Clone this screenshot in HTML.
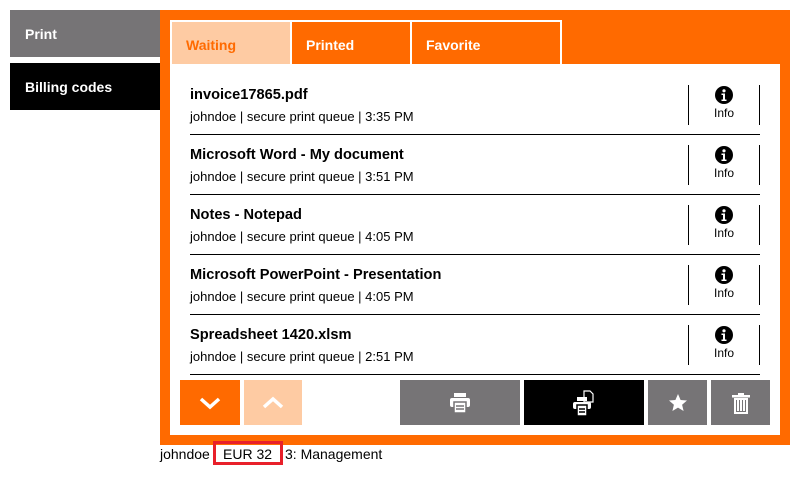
<!DOCTYPE html>
<html><head><style>
*{margin:0;padding:0;box-sizing:border-box}
body{width:800px;height:480px;background:#fff;font-family:"Liberation Sans",Arial,sans-serif;position:relative;overflow:hidden}
.a{position:absolute}
.side{left:10px;width:150px;height:47px;color:#fff;font-weight:bold;font-size:14px;padding:16px 0 0 15px}
.tab{top:22px;height:42px;background:#ff6a00;color:#fff;font-weight:bold;font-size:14px;padding:15px 0 0 14px}
.t{left:190px;font-weight:bold;font-size:14.6px;color:#000}
.s{left:190px;font-size:13px;color:#000}
.sep{left:190px;width:570px;height:1px;background:#000}
.vl{width:1px;height:40px;background:#000}
.btn{top:380px;height:45px;display:flex;align-items:center;justify-content:center}
</style></head><body>
<div class="a side" style="top:10px;background:#767476">Print</div>
<div class="a side" style="top:63px;background:#000">Billing codes</div>
<div class="a" style="left:160px;top:10px;width:630px;height:435px;background:#ff6a00"></div>
<div class="a" style="left:170px;top:20px;width:610px;height:415px;background:#fff"></div>
<div class="a" style="left:562px;top:20px;width:218px;height:44px;background:#ff6a00"></div>
<div class="a tab" style="left:172px;width:118px;background:#fecba3;color:#ff6a00">Waiting</div>
<div class="a tab" style="left:292px;width:118px">Printed</div>
<div class="a tab" style="left:412px;width:148px">Favorite</div>
<div id="rows"></div>
<script>
var d=[["invoice17865.pdf","3:35 PM"],["Microsoft Word - My document","3:51 PM"],["Notes - Notepad","4:05 PM"],["Microsoft PowerPoint - Presentation","4:05 PM"],["Spreadsheet 1420.xlsm","2:51 PM"]];
var h="";d.forEach(function(r,i){var y=74+i*60;
h+='<div class="a t" style="top:'+(y+13)+'px">'+r[0]+'</div><div class="a s" style="top:'+(y+35)+'px">johndoe | secure print queue | '+r[1]+'</div>'+
'<div class="a sep" style="top:'+(y+60)+'px"></div><div class="a vl" style="left:688px;top:'+(y+11)+'px"></div><div class="a vl" style="left:759px;top:'+(y+11)+'px"></div>'+
'<svg class="a" style="left:715px;top:'+(y+12)+'px" width="18" height="18" viewBox="0 0 18 18"><circle cx="9" cy="9" r="9" fill="#000"/><circle cx="9" cy="4.8" r="1.6" fill="#fff"/><path d="M6.5 7.5h3.5v6h1.5v1.5h-5v-1.5h1.5v-4.5h-1.5z" fill="#fff"/></svg>'+
'<div class="a" style="left:689px;width:70px;text-align:center;top:'+(y+32)+'px;font-size:12px">Info</div>';});
document.getElementById("rows").innerHTML=h;
</script>
<div class="a btn" style="left:180px;width:60px;background:#ff6a00"><svg width="24" height="14"><path d="M3 3l9 8 9-8" stroke="#fff" stroke-width="3.5" fill="none"/></svg></div>
<div class="a btn" style="left:244px;width:58px;background:#fecba3"><svg width="24" height="14"><path d="M3 11l9-8 9 8" stroke="#fff" stroke-width="3.5" fill="none"/></svg></div>
<div class="a btn" style="left:400px;width:120px;background:#767476"><svg width="22" height="20" viewBox="0 0 22 20"><rect x="5" y="0" width="12" height="4" fill="#fff"/><rect x="1" y="5" width="20" height="9" rx="2" fill="#fff"/><rect x="5" y="9" width="12" height="11" fill="#fff" stroke="#767476" stroke-width="1.5"/><path d="M7 13h8M7 16h8" stroke="#767476" stroke-width="1.5"/></svg></div>
<div class="a btn" style="left:524px;width:120px;background:#000"><svg width="26" height="26" viewBox="0 0 26 26"><path d="M13 1h6l3 3v8h-9z" fill="none" stroke="#fff" stroke-width="1.2"/><rect x="6" y="7" width="10" height="4" fill="#fff"/><rect x="2" y="12" width="18" height="7" rx="2" fill="#fff"/><rect x="6" y="15" width="10" height="11" fill="#fff" stroke="#000" stroke-width="1.5"/><path d="M8 19h6M8 22h6" stroke="#000" stroke-width="1.4"/></svg></div>
<div class="a btn" style="left:648px;width:59px;background:#767476"><svg width="20" height="20" viewBox="0 0 20 20"><path d="M10 1l2.6 6 6.4.5-4.9 4.2 1.5 6.3L10 14.6 4.4 18l1.5-6.3L1 7.5l6.4-.5z" fill="#fff"/></svg></div>
<div class="a btn" style="left:711px;width:59px;background:#767476"><svg width="20" height="22" viewBox="0 0 20 22"><path d="M7 1h6v2H7z M1 3h18v2.5H1z" fill="#fff"/><path d="M3 6h14v16H3z" fill="#fff"/><path d="M5 8v12h10V8" fill="#767476"/><path d="M6 8h2v11H6zM9 8h2v11H9zM12 8h2v11h-2z" fill="#fff"/></svg></div>
<div class="a" style="left:160px;top:446px;font-size:14px">johndoe</div>
<div class="a" style="left:213px;top:441px;width:70px;height:24px;border:3px solid #e8202a;font-size:14px;padding:2px 0 0 7px">EUR 32</div>
<div class="a" style="left:285px;top:446px;font-size:14px">3: Management</div>
</body></html>
